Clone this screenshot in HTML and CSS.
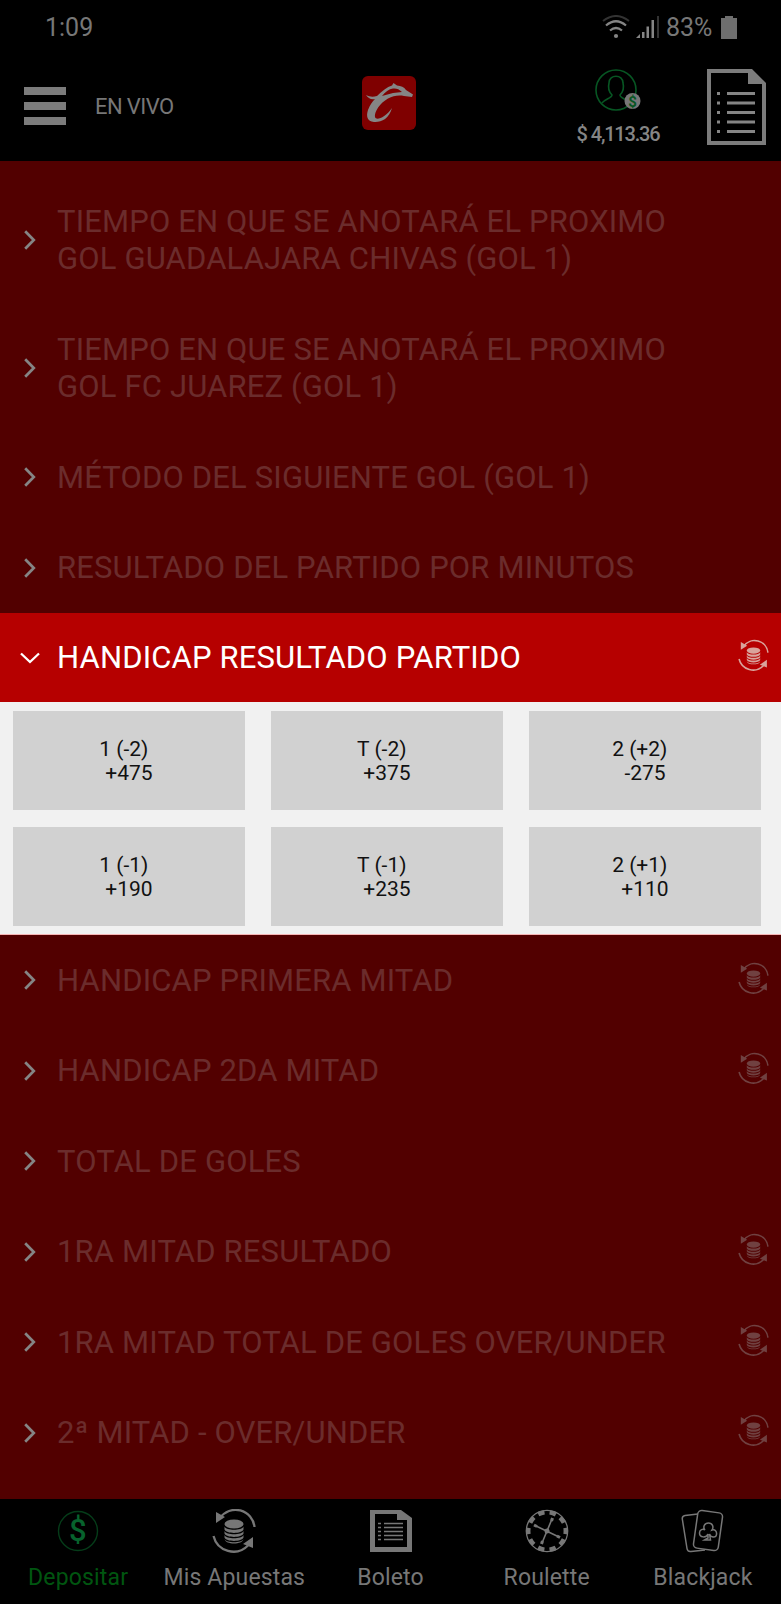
FILE: index.html
```
<!DOCTYPE html>
<html lang="es">
<head>
<meta charset="utf-8"/>
<title>En Vivo</title>
<meta name="viewport" content="width=device-width"/>
<link rel="stylesheet" href="styles.css">
</head>
<body>
<!-- shared icons -->
<svg class="defs" width="0" height="0">
<symbol id="i-cash" viewBox="0 0 44 44">
    <path d="M8 9A19 19 0 0 1 42.500 18M1.500 27A20.500 20.500 0 0 0 36 36.500" fill="none" stroke="currentColor" stroke-width="2.300"/>
    <path d="M4 3V14L13 8zM41 28V39L31 35z" fill="currentColor"/>
    <ellipse cx="22" cy="15" rx="9.500" ry="4.500" fill="currentColor"/>
    <path d="M12.500 17.500C14 21.800 30 21.800 31.500 17.500V20.500C30 25 14 25 12.500 20.500zM12.500 22C14 26.300 30 26.300 31.500 22V24.500C30 29 14 29 12.500 24.500zM12.500 26C14 30.300 30 30.300 31.500 26V28.500C30 33 14 33 12.500 28.500zM12.500 30C14 34.300 30 34.300 31.500 30C30.500 36 13.500 36 12.500 30z" fill="currentColor"/>
</symbol>
<symbol id="i-right" viewBox="0 0 12 20"><path d="M1.200 1.200L9.800 10L1.200 18.800" fill="none" stroke="currentColor" stroke-width="2.700"/></symbol>
<symbol id="i-down" viewBox="0 0 20 12"><path d="M1 1.500L10 10L19 1.500" fill="none" stroke="currentColor" stroke-width="2.300"/></symbol>
</svg>

<div class="status">
    <span class="time">1:09</span>
    <span class="signals">
        <svg width="28" height="24" viewBox="0 0 28 24" fill="none">
            <path d="M1 6Q14-4 27 6" stroke="#333" stroke-width="2"/>
            <path d="M4 10.500Q14 2 24 10.500M8 15.500Q14 10.500 20 15.500" stroke="#858585" stroke-width="2.200"/>
            <circle cx="14" cy="21" r="2.100" fill="#858585"/>
        </svg>
        <svg class="bars" width="24" height="24" viewBox="0 0 24 24">
            <path d="M0 23L4 19V23zM6 17H8.500V23H6zM10.500 11.500H13V23H10.500zM15.500 5H18V23H15.500z" fill="#858585"/>
            <path d="M21 1H23V23H21z" fill="#333"/>
        </svg>
        <span class="percent">83%</span>
        <svg width="16" height="23" viewBox="0 0 16 23"><path d="M0 2H4V0H12V2H16V23H0z" fill="#6e6e6e"/></svg>
    </span>
</div>

<header class="top">
    <div class="menu"><i></i><i></i><i></i></div>
    <span class="section">EN VIVO</span>
    <svg class="logo" width="54" height="54" viewBox="0 0 54 54">
        <rect width="54" height="54" rx="6" fill="#7f0000"/>
        <path d="M4 19C8 21 11 21 15 20C20 15 25 11 30 9.500L31.500 7L35 9.500C39 10 42 11 44 14L51 18.500L50 21L42 20C36 19 31 20 26 22.500C18 27 12 36 13 41C14 45 23 42 30 32C27 43 19 46.500 12 46C5 45.500 4 40 6 34C8 29 10 26 13 23C9 24 6 22 4 19M20 20L31 17L40 16C37 13 34 12 31 12.500C27 13 23 16 20 20z" fill="#858585" fill-rule="evenodd"/>
    </svg>
    <div class="account">
        <svg width="46" height="44" viewBox="0 0 46 44">
            <circle cx="21" cy="22" r="20" fill="none" stroke="#075623" stroke-width="1.600"/>
            <path d="M7 35C10 31 17 30 17 27C14 24 13 19 14 15C14 6 28 6 28 15C29 19 28 24 25 27C25 30 31 31 35 35" fill="none" stroke="#075623" stroke-width="1.600"/>
            <circle cx="37.500" cy="33" r="8" fill="#777"/>
            <text x="37.500" y="38.500" text-anchor="middle" class="coin-sign">$</text>
        </svg>
        <span class="balance">$<b>4,113.36</b></span>
    </div>
    <svg class="ticket" width="59" height="76" viewBox="0 0 59 76">
        <path d="M0 0H45L59 14V76H0zM4 4V72H55V15H41V4z" fill="#7c7c7c" fill-rule="evenodd"/>
        <path d="M20 24.500H48M20 34H48M20 43.500H48M20 53H48M20 62.500H48M10 24.500H13M10 34H13M10 43.500H13M10 53H13M10 62.500H13" stroke="#858585" stroke-width="3"/>
    </svg>
</header>

<main class="markets">
    <div class="row double"><svg class="arrow"><use href="#i-right"/></svg><span class="name">TIEMPO EN QUE SE ANOTARÁ EL PROXIMO<br>GOL GUADALAJARA CHIVAS (GOL 1)</span></div>
    <div class="row double"><svg class="arrow"><use href="#i-right"/></svg><span class="name">TIEMPO EN QUE SE ANOTARÁ EL PROXIMO<br>GOL FC JUAREZ (GOL 1)</span></div>
    <div class="row"><svg class="arrow"><use href="#i-right"/></svg><span class="name">MÉTODO DEL SIGUIENTE GOL (GOL 1)</span></div>
    <div class="row"><svg class="arrow"><use href="#i-right"/></svg><span class="name">RESULTADO DEL PARTIDO POR MINUTOS</span></div>

    <section class="open">
        <div class="row active"><svg class="arrow"><use href="#i-down"/></svg><span class="name">HANDICAP RESULTADO PARTIDO</span><svg class="cash"><use href="#i-cash"/></svg></div>
        <div class="odds">
            <div class="odd"><span>1 (-2)&nbsp;&nbsp;</span><span>+475</span></div>
            <div class="odd"><span>T (-2)&nbsp;&nbsp;</span><span>+375</span></div>
            <div class="odd"><span>2 (+2)&nbsp;&nbsp;</span><span>-275</span></div>
            <div class="odd"><span>1 (-1)&nbsp;&nbsp;</span><span>+190</span></div>
            <div class="odd"><span>T (-1)&nbsp;&nbsp;</span><span>+235</span></div>
            <div class="odd"><span>2 (+1)&nbsp;&nbsp;</span><span>+110</span></div>
        </div>
    </section>

    <div class="row"><svg class="arrow"><use href="#i-right"/></svg><span class="name">HANDICAP PRIMERA MITAD</span><svg class="cash"><use href="#i-cash"/></svg></div>
    <div class="row"><svg class="arrow"><use href="#i-right"/></svg><span class="name">HANDICAP 2DA MITAD</span><svg class="cash"><use href="#i-cash"/></svg></div>
    <div class="row"><svg class="arrow"><use href="#i-right"/></svg><span class="name">TOTAL DE GOLES</span></div>
    <div class="row"><svg class="arrow"><use href="#i-right"/></svg><span class="name">1RA MITAD RESULTADO</span><svg class="cash"><use href="#i-cash"/></svg></div>
    <div class="row"><svg class="arrow"><use href="#i-right"/></svg><span class="name">1RA MITAD TOTAL DE GOLES OVER/UNDER</span><svg class="cash"><use href="#i-cash"/></svg></div>
    <div class="row"><svg class="arrow"><use href="#i-right"/></svg><span class="name">2ª MITAD - OVER/UNDER</span><svg class="cash"><use href="#i-cash"/></svg></div>
</main>

<nav class="tabs">
    <a class="tab deposit">
        <svg width="44" height="44" viewBox="0 0 44 44"><circle cx="22" cy="22" r="19.500" fill="none" stroke="#053c19" stroke-width="1.400"/><text x="22" y="31.500" text-anchor="middle" class="money">$</text></svg>
        <span>Depositar</span>
    </a>
    <a class="tab"><svg width="44" height="44"><use href="#i-cash"/></svg><span>Mis Apuestas</span></a>
    <a class="tab">
        <svg width="44" height="44" viewBox="0 0 44 44">
            <path d="M1 1H32L43 9V43H1zM6 5V38H38V11H28V5z" fill="currentColor" fill-rule="evenodd"/>
            <path d="M15 14.500H34M15 18.500H34M15 22.500H34M15 26.500H34M15 30.500H34M9 14.500H12M9 18.500H12M9 22.500H12M9 26.500H12M9 30.500H12" stroke="currentColor" stroke-width="1.700"/>
        </svg>
        <span>Boleto</span>
    </a>
    <a class="tab">
        <svg width="44" height="44" viewBox="0 0 44 44" fill="none" stroke="currentColor">
            <circle cx="22" cy="22" r="20.700" stroke-width="1.300"/>
            <circle cx="22" cy="22" r="18.800" stroke-width="4.500" pathLength="100" stroke-dasharray="5.500 4.500" stroke-dashoffset="2.700"/>
            <path d="M10 16.500L34 28M27 10L17 34" stroke-width="1.600"/>
            <path d="M9 16L12 17.500M32 27L35 28.500M27.500 9L26.500 12M17.500 32L16.500 35" stroke-width="3"/>
            <circle cx="22" cy="22" r="2.500" fill="currentColor" stroke="none"/>
        </svg>
        <span>Roulette</span>
    </a>
    <a class="tab">
        <svg width="44" height="44" viewBox="0 0 44 44" fill="none" stroke="currentColor" stroke-width="1.500">
            <path d="M17 5L4 6.500Q1 7 1.300 10L6 39.500Q6.500 43 10 42.500L24 41"/>
            <rect x="14.500" y="2.500" width="25" height="38" rx="4" transform="rotate(8 27 21.500)"/>
            <path d="M27 25C25.500 29 18.500 29 18.500 24C18.500 20.500 22 19.500 24 21C21.500 18 23.500 14 27.500 14C31.500 14 33 18 31 21C34 20 36 22.500 35.500 25.500C35 29 30 29 28.500 25L29.500 31H23.500L27 29z"/>
        </svg>
        <span>Blackjack</span>
    </a>
</nav>
</body>
</html>
```
FILE: styles.css
```
/* reset */
html,body,header,main,nav,section,div,span,a,i,b{margin:0;padding:0;}
*{box-sizing:border-box;}
i,b{font-style:normal;font-weight:inherit;}
svg{display:block;flex:none;}
body{width:781px;height:1604px;overflow:hidden;background-color:#000;color:#858585;font-family:Roboto,"Liberation Sans",sans-serif;}
.defs{display:none;}

/* status bar */
.status{display:flex;justify-content:space-between;align-items:center;height:54px;padding:0 44px 0 45px;font-size:25px;}
.status .time{color:#777;}
.signals{display:flex;align-items:center;}
.signals .bars{margin:0 6px 0 6px;}
.signals .percent{width:46px;margin-right:9px;color:#777;white-space:nowrap;}

/* header */
.top{display:flex;align-items:flex-start;height:107px;padding-left:24px;}
.menu{width:42px;margin-top:33px;}
.menu i{display:block;height:8px;margin-bottom:7px;background-color:#7c7c7c;}
.section{width:100px;margin:40px 0 0 29px;color:#777;font-size:22px;line-height:26px;letter-spacing:-.6px;}
.logo{margin:22px 0 0 167px;}
.account{width:100px;margin:14px 0 0 152px;}
.account svg{margin-left:27px;}
.coin-sign{fill:#075623;font-size:15px;font-weight:bold;}
.balance{display:flex;justify-content:center;margin-top:9px;gap:4px;font-size:20px;line-height:26px;font-weight:500;letter-spacing:-1.2px;}
.ticket{margin:15px 0 0 39px;}

/* markets */
.markets{height:1338px;padding-top:15px;background-color:#520000;}
.row{display:flex;align-items:center;height:90.5px;padding:0 12px 0 24px;color:#6b2c2c;font-size:31px;line-height:37px;letter-spacing:.15px;}
.row.double{height:128px;}
.arrow{width:12px;height:20px;color:#858585;}
.name{flex:1;margin-left:21px;white-space:nowrap;}
.cash{width:31px;height:33px;margin-top:-4px;color:#704141;}
.open{height:322px;border-bottom:1px solid #f7b5b5;background-color:#f1f1f1;}
.row.active{height:89px;padding-left:20px;background-color:#b60000;color:#fff;}
.active .arrow{width:20px;height:12px;}
.active .name{margin-left:17px;}
.active .arrow{color:#fff;}
.active .cash{color:#d9a39b;}
.odds{display:grid;grid-template-columns:repeat(3,232px);grid-auto-rows:99px;gap:17px 26px;padding:9px 0 0 13px;}
.odd{display:flex;flex-direction:column;justify-content:center;align-items:center;background-color:#d1d1d1;color:#111;font-size:21px;line-height:24px;}

/* bottom tabs */
.tabs{display:flex;}
.tab{display:flex;flex:1;flex-direction:column;align-items:center;padding-top:10px;color:#777;font-size:23px;line-height:28px;letter-spacing:.15px;white-space:nowrap;}
.tab span{margin-top:11px;}
.deposit{color:#005510;}
.money{fill:#07622d;font-size:31px;font-weight:500;}
```
